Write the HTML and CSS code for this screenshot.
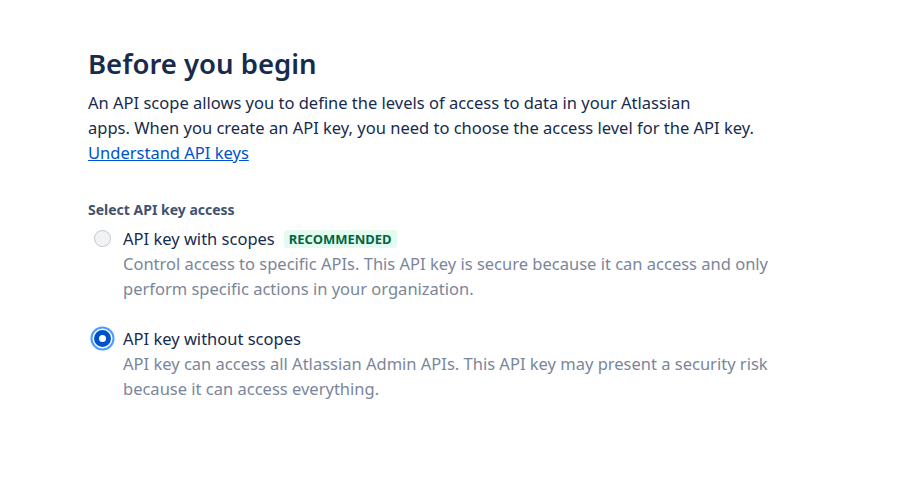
FILE: index.html
```html
<!DOCTYPE html>
<html lang="en">
<head>
<meta charset="utf-8">
<title>Before you begin</title>
<link rel="stylesheet" href="styles.css">
</head>
<body>
<main class="page">
  <h1 class="title">Before you begin</h1>
  <p class="intro">An API scope allows you to define the levels of access to data in your Atlassian<br>apps. When you create an API key, you need to choose the access level for the API key.<br><a class="link" href="#">Understand API keys</a></p>
  <fieldset class="group">
    <legend class="legend">Select API key access</legend>
    <label class="option">
      <span class="radio"></span>
      <span class="option-body">
        <span class="option-title">API key with scopes <span class="lozenge">Recommended</span></span>
        <span class="option-desc">Control access to specific APIs. This API key is secure because it can access and only<br>perform specific actions in your organization.</span>
      </span>
    </label>
    <label class="option">
      <span class="radio checked"></span>
      <span class="option-body">
        <span class="option-title">API key without scopes</span>
        <span class="option-desc">API key can access all Atlassian Admin APIs. This API key may present a security risk<br>because it can access everything.</span>
      </span>
    </label>
  </fieldset>
</main>
</body>
</html>
```
FILE: styles.css
```css
* { box-sizing: border-box; }
html, body { margin: 0; padding: 0; background: #fff; }
body {
  font-family: "Noto Sans", "Open Sans", sans-serif;
  color: #172b4d;
  font-size: 16.5px;
}
.page {
  padding: 44px 0 0 88px;
}
.title {
  margin: 0;
  font-size: 27.5px;
  font-weight: 600;
  line-height: 40px;
  color: #172b4d;
}
.intro {
  margin: 6px 0 0;
  font-size: 16.5px;
  line-height: 25px;
  color: #172b4d;
}
.link { color: #0052cc; text-decoration: underline; }
.group {
  border: 0;
  margin: 35px 0 0;
  padding: 0;
}
.legend {
  padding: 0;
  font-size: 14px;
  font-weight: 700;
  color: #42526e;
  line-height: 20px;
  margin-bottom: 6px;
}
.option {
  display: flex;
  gap: 12px;
  align-items: flex-start;
  margin-bottom: 25px;
}
.radio {
  flex: none;
  width: 17px;
  height: 17px;
  margin: 4px 0 0 6px;
  border-radius: 50%;
  background: #f1f2f4;
  border: 1.5px solid #c1c7d0;
}
.radio.checked {
  background: #fff;
  border: 5px solid #0052cc;
  box-shadow: 0 0 0 1.5px #fff, 0 0 0 3.5px #4c9aff;
}
.option-body { display: flex; flex-direction: column; }
.option-title {
  font-size: 16.5px;
  line-height: 25px;
  color: #172b4d;
  display: flex;
  align-items: center;
  gap: 9px;
}
.lozenge {
  background: #e3fcef;
  color: #006644;
  font-size: 13px;
  font-weight: 700;
  text-transform: uppercase;
  padding: 0 5px;
  line-height: 18px;
  border-radius: 3px;
}
.option-desc {
  font-size: 16.5px;
  line-height: 25px;
  color: #7a869a;
}
```
